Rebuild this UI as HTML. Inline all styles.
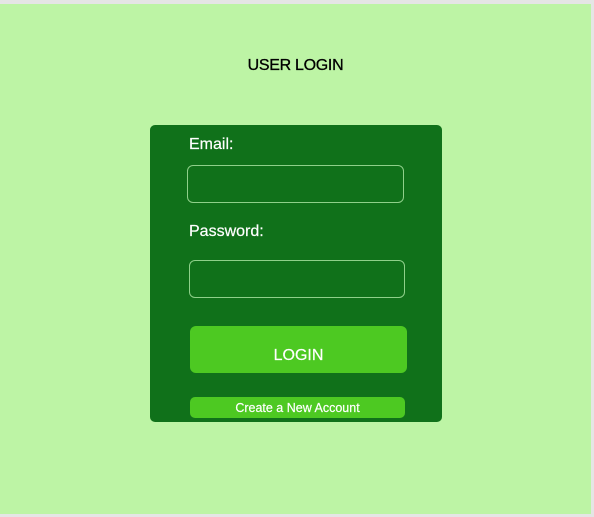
<!DOCTYPE html>
<html><head><style>
html,body{margin:0;padding:0;width:594px;height:517px;background:#e5e5e5;overflow:hidden;font-family:"Liberation Sans",sans-serif}
.bg{position:absolute;left:0;top:4px;width:591px;height:510px;background:#bdf4a5}
.t{position:absolute;left:0;width:591px;text-align:center;top:57px;font-size:16px;color:#000;letter-spacing:-0.3px;-webkit-text-stroke:0.3px #000}
.card{position:absolute;left:150px;top:125px;width:292px;height:297px;background:#10711a;border-radius:5px}
.lbl{position:absolute;color:#fff;font-size:16px;-webkit-text-stroke:0.2px #fff}
.in{position:absolute;border:1px solid #8fd08a;border-radius:6px;box-sizing:border-box}
.btn{position:absolute;background:#4dc922;border-radius:6px;color:#fff;text-align:center;-webkit-text-stroke:0.2px #fff}
</style></head><body>
<div class="bg"></div>
<div class="t">USER LOGIN</div>
<div class="card"></div>
<div class="lbl" style="left:189px;top:136px">Email:</div>
<div class="in" style="left:187px;top:165px;width:217px;height:38px"></div>
<div class="lbl" style="left:189px;top:223px">Password:</div>
<div class="in" style="left:189px;top:260px;width:216px;height:38px"></div>
<div class="btn" style="left:190px;top:326px;width:217px;height:47px;line-height:60px;font-size:16px">LOGIN</div>
<div class="btn" style="left:190px;top:397px;width:215px;height:21px;line-height:22px;font-size:12.5px;border-radius:5px">Create a New Account</div>
</body></html>
